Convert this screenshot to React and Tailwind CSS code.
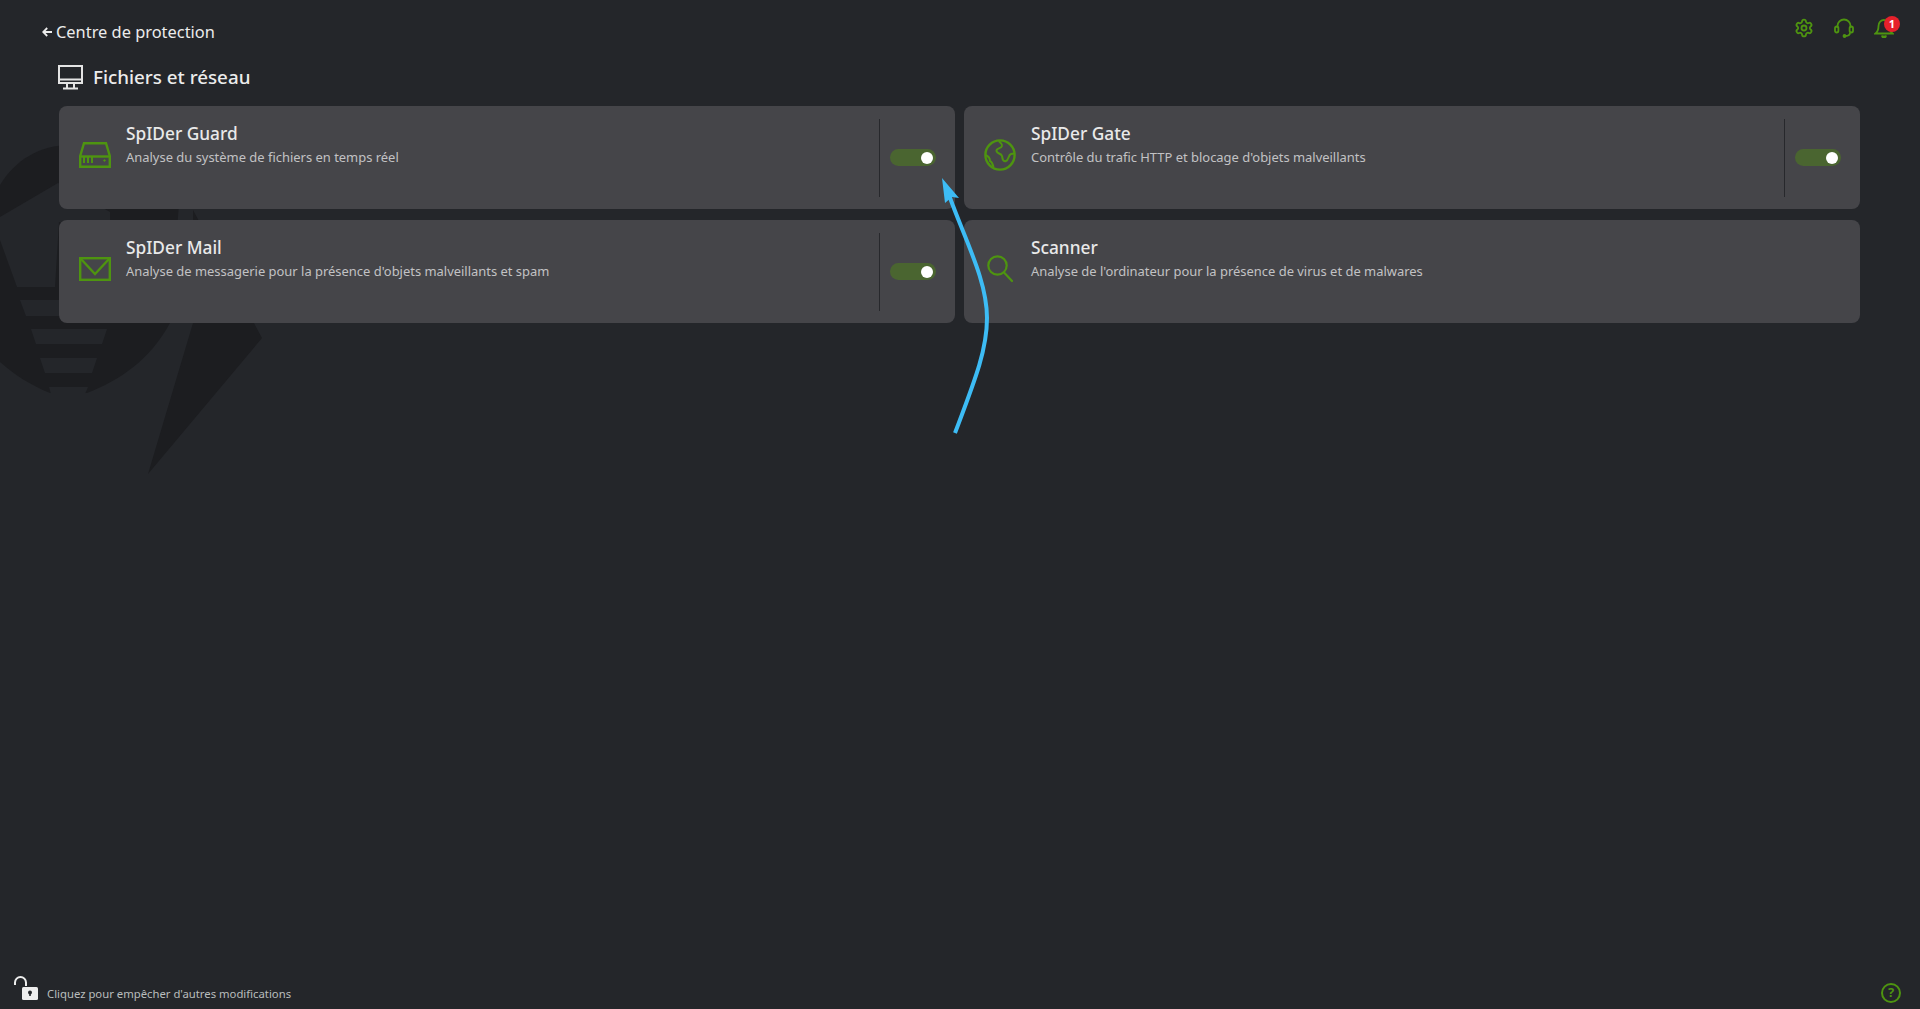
import { Settings } from "lucide-react";

const green = "#4e9410";

const HddIcon = () => (
  <svg width="32" height="26" viewBox="0 0 32 26" fill="none" stroke={green} strokeWidth="2.4">
    <path d="M1.2 14 L5 1.2 H27 L30.8 14 V24.8 H1.2 Z" />
    <path d="M1.2 14.5 H30.8" />
    <path d="M5 15 V21 M9 15 V21 M13 15 V21" strokeWidth="2" />
    <circle cx="25.5" cy="18.5" r="0.8" fill={green} strokeWidth="1" />
  </svg>
);

const GlobeIcon = () => (
  <svg width="32" height="32" viewBox="0 0 32 32" fill="none" stroke={green} strokeWidth="2.4">
    <circle cx="16" cy="16" r="14.6" />
    <path d="M15 2 C16 4 19 5 18 7 C17 10 12 9 12.5 12 C13 15 17 14 18 17 C18.5 20 19 23 22 22 C25 21 24 16 27 15 C28 14.5 29 14.5 30.5 14.5" strokeWidth="2" />
    <path d="M1.5 16 C4 17 6 19 6 22 C8 23 9 26 9.5 28.5" strokeWidth="2" />
  </svg>
);

const MailIcon = () => (
  <svg width="32" height="24" viewBox="0 0 32 24" fill="none" stroke={green} strokeWidth="2.4">
    <rect x="1.2" y="1.2" width="29.6" height="21.6" />
    <path d="M2 2 L16 17 L30 2" />
  </svg>
);

const SearchIcon = () => (
  <svg width="26" height="28" viewBox="0 0 26 28" fill="none" stroke={green} strokeWidth="2.2">
    <circle cx="10.5" cy="10.5" r="9.2" />
    <path d="M17 17.5 L25 26" strokeLinecap="round" />
  </svg>
);

const MonitorIcon = () => (
  <svg width="25" height="25" viewBox="0 0 25 25" fill="none" stroke="#e4e4e4" strokeWidth="2">
    <rect x="1" y="1" width="23" height="17" />
    <path d="M1 14.5 H24" />
    <path d="M9 18 V23 M16 18 V23 M5 23.5 H20" />
  </svg>
);

const BackArrow = () => (
  <svg width="10" height="10" viewBox="0 0 10 10" fill="none" stroke="#ececec" strokeWidth="1.8">
    <path d="M10 5 H1.5 M5.2 1 L1.2 5 L5.2 9" />
  </svg>
);

const HeadsetIcon = () => (
  <svg width="20" height="20" viewBox="0 0 20 20" fill="none" stroke={green} strokeWidth="1.8">
    <path d="M3.5 10 V8 a6.5 6.5 0 0 1 13 0 V10" />
    <rect x="1" y="8.5" width="3.4" height="6" rx="1.7" />
    <rect x="15.6" y="8.5" width="3.4" height="6" rx="1.7" />
    <path d="M16 14.5 C16 17 14 18 11.5 18" />
    <circle cx="10.5" cy="18" r="1" fill={green} />
  </svg>
);

const BellIcon = () => (
  <svg width="20" height="20" viewBox="0 0 20 20" fill="none" stroke={green} strokeWidth="1.8">
    <path d="M1.5 15.5 H18.5 C16 13.5 15.5 11 15.5 8 C15.5 4.5 13 2 10 2 C7 2 4.5 4.5 4.5 8 C4.5 11 4 13.5 1.5 15.5 Z" />
    <path d="M8 17.5 a2 2 0 0 0 4 0" fill={green} />
  </svg>
);

const LockIcon = () => (
  <svg width="26" height="26" viewBox="0 0 26 26" fill="none">
    <path d="M1 9 V6.5 a5.5 5.5 0 0 1 11 0 V10" stroke="#ededed" strokeWidth="2" />
    <rect x="8" y="11" width="16" height="13" rx="1.5" fill="#ededed" />
    <circle cx="16" cy="16.5" r="2" fill="#24262a" />
    <rect x="15.2" y="16.5" width="1.6" height="3.5" fill="#24262a" />
  </svg>
);

const Toggle = () => (
  <div className="w-[46px] h-[17px] rounded-full bg-[#4a6530] flex items-center justify-end pr-[3px]">
    <div className="w-3 h-3 rounded-full bg-white" />
  </div>
);

const Card = ({ icon, title, desc, toggle }) => (
  <div className="relative flex h-[103px] rounded-lg bg-[#454549]">
    <div className="w-[67px] pl-[19px] pt-[29px] shrink-0 flex">
      <div className="w-[34px] h-[40px] flex items-center justify-center">{icon}</div>
    </div>
    <div className="flex-1 pt-[15px]">
      <div className="text-[17.3px] leading-[26px] font-medium text-[#e9e9e9]">{title}</div>
      <div className="text-[12.95px] leading-[20px] text-[#c2c2c4]">{desc}</div>
    </div>
    {toggle && (
      <div className="flex items-center w-[76px] shrink-0">
        <div className="w-px h-[78px] bg-[#27282c]" />
        <div className="ml-[10px]">
          <Toggle />
        </div>
      </div>
    )}
  </div>
);

export default function App() {
  return (
    <div
      className="relative h-[1009px] overflow-hidden bg-[#24262a] flex flex-col"
      style={{ fontFamily: '"Noto Sans", "Open Sans", sans-serif' }}
    >
      {/* watermark */}
      <svg className="absolute left-0 top-[130px]" width="280" height="350" viewBox="0 0 280 350" fill="#1c1d20">
        <path d="M0 55 C15 30 40 15 70 15 L180 60 L170 193 C150 230 120 250 87 263 L50 263 C30 255 15 245 0 232 Z" />
        <path d="M193 193 L193 80 L262 208 L148 344 Z" />
        <g fill="#24262a">
          <path d="M0 87 L58 53 L110 82 L110 92 L59 92 L52 92 L38 133 L28 95 L58 78 L59 92 L55 157 L17 157 L0 110 Z" />
          <path d="M20 170 H115 L110 186 H26 Z" />
          <path d="M31 199 H107 L102 214 H36 Z" />
          <path d="M40 228 H97 L92 243 H45 Z" />
          <path d="M49 257 H88 L85 264 H51 Z" />
        </g>
      </svg>

      <div className="relative flex flex-col flex-1">
        <div className="flex justify-between pt-[18px] pl-[42px] pr-[26px] h-[58px]">
          <div className="flex items-center h-[28px] gap-[4px] text-[16.4px] text-[#ececec]">
            <BackArrow />
            <span>Centre de protection</span>
          </div>
          <div className="flex gap-[20px] h-[20px]">
            <Settings size={20} color={green} strokeWidth={2.2} />
            <HeadsetIcon />
            <div className="relative">
              <BellIcon />
              <div className="absolute -top-[2px] -right-[6px] w-4 h-4 rounded-full bg-[#e6212b] text-white text-[11px] leading-4 text-center font-bold">
                1
              </div>
            </div>
          </div>
        </div>

        <div className="flex items-center gap-[10px] pl-[58px] h-[38px] text-[18.8px] font-medium text-[#ececec]">
          <MonitorIcon />
          <span>Fichiers et réseau</span>
        </div>

        <div className="grid grid-cols-2 gap-x-[9px] gap-y-[11px] ml-[59px] mr-[60px] mt-[10px]">
          <Card icon={<HddIcon />} title="SpIDer Guard" desc="Analyse du système de fichiers en temps réel" toggle />
          <Card icon={<GlobeIcon />} title="SpIDer Gate" desc="Contrôle du trafic HTTP et blocage d'objets malveillants" toggle />
          <Card icon={<MailIcon />} title="SpIDer Mail" desc="Analyse de messagerie pour la présence d'objets malveillants et spam" toggle />
          <Card icon={<SearchIcon />} title="Scanner" desc="Analyse de l'ordinateur pour la présence de virus et de malwares" />
        </div>

        <div className="mt-auto flex items-end justify-between pl-[14px] pr-[19px] pb-[6px]">
          <div className="flex items-center gap-[7px] text-[11.3px] text-[#b9bdbd]">
            <LockIcon />
            <span className="pt-[12px]">Cliquez pour empêcher d'autres modifications</span>
          </div>
          <div className="w-[20px] h-[20px] rounded-full border-2 border-[#4e9410] flex items-center justify-center text-[13px] font-bold text-[#4e9410]">
            ?
          </div>
        </div>
      </div>

      {/* annotation arrow */}
      <svg className="absolute left-[930px] top-[170px]" width="70" height="270" viewBox="930 170 70 270" fill="none">
        <path d="M955 433 C975 380 987 350 987 318 C987 280 965 240 949 195" stroke="#3dbcf5" strokeWidth="4" />
        <path d="M942 178 L959 198 L952 197 L945 203 Z" fill="#3dbcf5" />
      </svg>
    </div>
  );
}
